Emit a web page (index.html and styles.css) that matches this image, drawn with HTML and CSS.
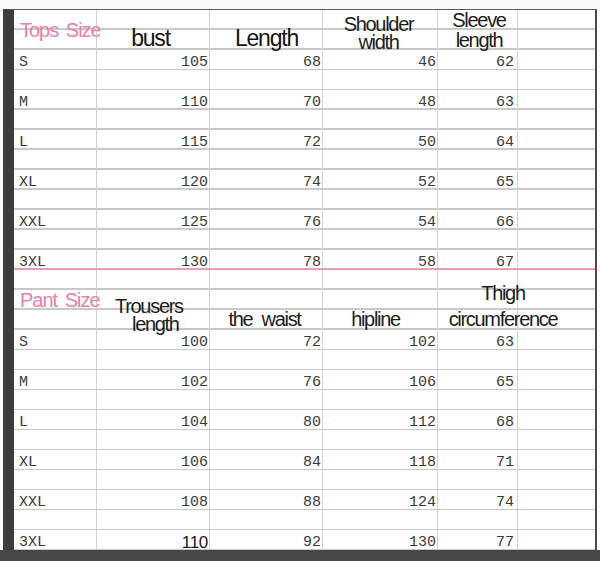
FILE: index.html
```html
<!DOCTYPE html>
<html>
<head>
<meta charset="utf-8">
<title>Size chart</title>
<link rel="stylesheet" href="styles.css">
</head>
<body>
<div class="page">
  <div class="topgap"></div>
  <div class="middle">
    <div class="sheet">
      <div class="hdr hdr-tops">
        <div class="h title t-tops">Tops Size</div>
        <div class="h big t-bust">bust</div>
        <div class="h big">Length</div>
        <div class="h two t-shoulder"><span class="ln">Shoulder</span><span class="ln">width</span></div>
        <div class="h two t-sleeve"><span class="ln">Sleeve</span><span class="ln">length</span></div>
        <div class="h"></div>
      </div>
      <div class="row"><div class="c lab">S</div><div class="c num">105</div><div class="c num">68</div><div class="c num">46</div><div class="c num n5">62</div><div class="c"></div></div>
      <div class="row"></div>
      <div class="row"><div class="c lab">M</div><div class="c num">110</div><div class="c num">70</div><div class="c num">48</div><div class="c num n5">63</div><div class="c"></div></div>
      <div class="row"></div>
      <div class="row"><div class="c lab">L</div><div class="c num">115</div><div class="c num">72</div><div class="c num">50</div><div class="c num n5">64</div><div class="c"></div></div>
      <div class="row"></div>
      <div class="row"><div class="c lab">XL</div><div class="c num">120</div><div class="c num">74</div><div class="c num">52</div><div class="c num n5">65</div><div class="c"></div></div>
      <div class="row"></div>
      <div class="row"><div class="c lab">XXL</div><div class="c num">125</div><div class="c num">76</div><div class="c num">54</div><div class="c num n5">66</div><div class="c"></div></div>
      <div class="row"></div>
      <div class="row row-pink"><div class="c lab">3XL</div><div class="c num">130</div><div class="c num">78</div><div class="c num">58</div><div class="c num n5">67</div><div class="c"></div></div>
      <div class="hdr hdr-pants">
        <div class="h title t-pant">Pant Size</div>
        <div class="h two t-trousers"><span class="ln ln-a">Trousers</span><span class="ln ln-b">length</span></div>
        <div class="h t-low t-waist">the waist</div>
        <div class="h t-low t-hip">hipline</div>
        <div class="h two t-thigh"><span class="ln">Thigh</span><span class="ln">circumference</span></div>
      </div>
      <div class="row"><div class="c lab">S</div><div class="c num">100</div><div class="c num">72</div><div class="c num">102</div><div class="c num n5">63</div><div class="c"></div></div>
      <div class="row"></div>
      <div class="row"><div class="c lab">M</div><div class="c num">102</div><div class="c num">76</div><div class="c num">106</div><div class="c num n5">65</div><div class="c"></div></div>
      <div class="row"></div>
      <div class="row"><div class="c lab">L</div><div class="c num">104</div><div class="c num">80</div><div class="c num">112</div><div class="c num n5">68</div><div class="c"></div></div>
      <div class="row"></div>
      <div class="row"><div class="c lab">XL</div><div class="c num">106</div><div class="c num">84</div><div class="c num">118</div><div class="c num n5">71</div><div class="c"></div></div>
      <div class="row"></div>
      <div class="row"><div class="c lab">XXL</div><div class="c num">108</div><div class="c num">88</div><div class="c num">124</div><div class="c num n5">74</div><div class="c"></div></div>
      <div class="row"></div>
      <div class="row"><div class="c lab">3XL</div><div class="c num sans">110</div><div class="c num">92</div><div class="c num">130</div><div class="c num n5">77</div><div class="c"></div></div>
    </div>
  </div>
  <div class="bottom"></div>
</div>
</body>
</html>
```

FILE: styles.css
```css
html, body {
  margin: 0;
  padding: 0;
  background: #ffffff;
}

.page {
  width: 600px;
  height: 561px;
  display: flex;
  flex-direction: column;
  background: #fbfbfb;
  overflow: hidden;
}

.topgap {
  height: 9px;
  flex: none;
}

.middle {
  display: flex;
  padding: 0 3px;
  flex: none;
}

.sheet {
  width: 581px;
  height: 540px;
  border-left: 11px solid #3d3d3d;
  border-top: 1px solid #5a5a5a;
  border-right: 2px solid #4a4a4a;
  display: flex;
  flex-direction: column;
  background-color: #ffffff;
  background-image:
    linear-gradient(to right,
      transparent 82px, #d2d2d2 82px, #d2d2d2 83px, transparent 83px,
      transparent 195px, #d2d2d2 195px, #d2d2d2 196px, transparent 196px,
      transparent 308px, #d2d2d2 308px, #d2d2d2 309px, transparent 309px,
      transparent 423px, #d2d2d2 423px, #d2d2d2 424px, transparent 424px,
      transparent 503px, #d2d2d2 503px, #d2d2d2 504px, transparent 504px),
    repeating-linear-gradient(to bottom,
      transparent 0, transparent 18.5px, #c8c8c8 18.5px, #c8c8c8 20px);
}

.row,
.hdr {
  display: grid;
  grid-template-columns: 83px 113px 113px 115px 80px 77px;
  flex: none;
}

.row {
  height: 20px;
}

.row-pink {
  box-shadow: inset 0 -2px 0 #e99bb8;
}

.hdr-tops {
  height: 40px;
}

.hdr-pants {
  height: 60px;
}

.c {
  box-sizing: border-box;
  height: 20px;
  padding-top: 3px;
  line-height: 20px;
  font-family: "Liberation Mono", "DejaVu Sans Mono", monospace;
  font-size: 15px;
  color: #3a3a3a;
  white-space: nowrap;
}

.lab {
  padding-left: 5px;
}

.num {
  text-align: right;
  padding-right: 2px;
}

.n5 {
  padding-right: 4px;
}

.sans {
  font-family: "Liberation Sans", Arial, sans-serif;
  font-size: 17px;
  color: #202020;
  letter-spacing: -0.3px;
}

.h {
  box-sizing: border-box;
  font-family: "Liberation Sans", Arial, sans-serif;
  font-size: 20px;
  letter-spacing: -1.3px;
  color: #1c1c1c;
  text-align: center;
  white-space: nowrap;
  line-height: 20px;
}

.ln {
  display: block;
}

.title {
  text-align: left;
  padding-left: 6px;
  color: #e680a8;
  letter-spacing: -1px;
  word-spacing: 3px;
}

.t-tops {
  padding-top: 10px;
}

.big {
  font-size: 23px;
  line-height: 23px;
  padding-top: 17px;
  letter-spacing: -1.2px;
  color: #141414;
}

.t-bust {
  padding-right: 6px;
}

.t-shoulder {
  line-height: 18px;
  padding-top: 5px;
  padding-right: 4px;
}

.t-sleeve {
  line-height: 20px;
  padding-top: 0;
  padding-left: 2px;
}

.t-pant {
  padding-top: 20px;
}

.t-trousers {
  line-height: 17.5px;
  padding-top: 28px;
  text-align: left;
}

.ln-a {
  padding-left: 18px;
}

.ln-b {
  padding-left: 35px;
}

.t-low {
  padding-top: 39px;
}

.t-waist {
  word-spacing: 5px;
  padding-right: 4px;
}

.t-hip {
  padding-right: 10px;
}

.t-thigh {
  grid-column: 5 / 7;
  line-height: 26px;
  padding-top: 10px;
  padding-right: 27px;
}

.bottom {
  flex: 1;
  background: #474747;
}
```
